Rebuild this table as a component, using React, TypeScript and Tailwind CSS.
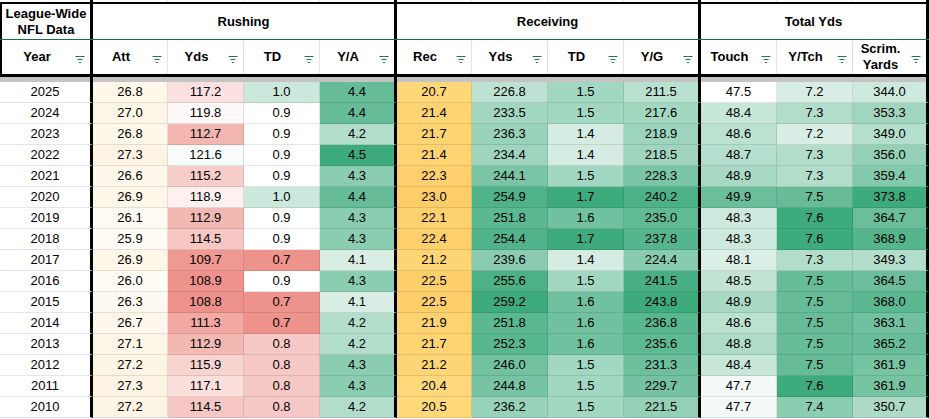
import React from "react";

type Col = { w: string; thick?: boolean };

const cols: Col[] = [
  { w: "w-[93px]", thick: true },
  { w: "w-[75px]" },
  { w: "w-[76px]" },
  { w: "w-[76px]" },
  { w: "w-[77px]", thick: true },
  { w: "w-[75px]" },
  { w: "w-[76px]" },
  { w: "w-[76px]" },
  { w: "w-[77px]", thick: true },
  { w: "w-[76px]" },
  { w: "w-[76px]" },
  { w: "w-[76px]", thick: true },
];

const years = [2025, 2024, 2023, 2022, 2021, 2020, 2019, 2018, 2017, 2016, 2015, 2014, 2013, 2012, 2011, 2010];
const att = [26.8, 27.0, 26.8, 27.3, 26.6, 26.9, 26.1, 25.9, 26.9, 26.0, 26.3, 26.7, 27.1, 27.2, 27.3, 27.2];
const ryds = [117.2, 119.8, 112.7, 121.6, 115.2, 118.9, 112.9, 114.5, 109.7, 108.9, 108.8, 111.3, 112.9, 115.9, 117.1, 114.5];
const rtd = [1.0, 0.9, 0.9, 0.9, 0.9, 1.0, 0.9, 0.9, 0.7, 0.9, 0.7, 0.7, 0.8, 0.8, 0.8, 0.8];
const ya = [4.4, 4.4, 4.2, 4.5, 4.3, 4.4, 4.3, 4.3, 4.1, 4.3, 4.1, 4.2, 4.2, 4.3, 4.3, 4.2];
const rec = [20.7, 21.4, 21.7, 21.4, 22.3, 23.0, 22.1, 22.4, 21.2, 22.5, 22.5, 21.9, 21.7, 21.2, 20.4, 20.5];
const recYds = [226.8, 233.5, 236.3, 234.4, 244.1, 254.9, 251.8, 254.4, 239.6, 255.6, 259.2, 251.8, 252.3, 246.0, 244.8, 236.2];
const recTd = [1.5, 1.5, 1.4, 1.4, 1.5, 1.7, 1.6, 1.7, 1.4, 1.5, 1.6, 1.6, 1.6, 1.5, 1.5, 1.5];
const yg = [211.5, 217.6, 218.9, 218.5, 228.3, 240.2, 235.0, 237.8, 224.4, 241.5, 243.8, 236.8, 235.6, 231.3, 229.7, 221.5];
const touch = [47.5, 48.4, 48.6, 48.7, 48.9, 49.9, 48.3, 48.3, 48.1, 48.5, 48.9, 48.6, 48.8, 48.4, 47.7, 47.7];
const ytch = [7.2, 7.3, 7.2, 7.3, 7.3, 7.5, 7.6, 7.6, 7.3, 7.5, 7.5, 7.5, 7.5, 7.5, 7.6, 7.4];
const scrim = [344.0, 353.3, 349.0, 356.0, 359.4, 373.8, 364.7, 368.9, 349.3, 364.5, 368.0, 363.1, 365.2, 361.9, 361.9, 350.7];

const hex = (h: string) => [1, 3, 5].map((i) => parseInt(h.slice(i, i + 2), 16));
const clamp = (t: number) => Math.max(0, Math.min(1, t));
function mix(a: string, b: string, t: number) {
  const A = hex(a);
  const B = hex(b);
  const k = clamp(t);
  const c = A.map((v, i) => Math.round(v + (B[i] - v) * k));
  return `rgb(${c[0]},${c[1]},${c[2]})`;
}

const WHITE = "#ffffff";
const GREEN = "#3eab7d";
const RED = "#ee918a";

const green = (v: number, lo: number, hi: number) => mix(WHITE, GREEN, (v - lo) / (hi - lo));

const scales: ((v: number) => string)[] = [
  () => WHITE,
  (v) => mix("#fffcf6", "#fdf4e3", (v - 25.9) / (27.3 - 25.9)),
  (v) => (v <= 120.5 ? mix(WHITE, RED, (120.5 - v) / (120.5 - 108.8)) : mix(WHITE, GREEN, (v - 120.5) / 30)),
  (v) => (v < 0.9 ? mix(WHITE, RED, ((0.9 - v) / 0.2) * 0.98) : v > 0.9 ? mix(WHITE, GREEN, 0.27) : WHITE),
  (v) => green(v, 4.0, 4.5),
  (v) => mix("#fed87a", "#fdcd68", (v - 20.4) / (23.0 - 20.4)),
  (v) => green(v, 210, 259.2),
  (v) => green(v, 1.315, 1.7),
  (v) => green(v, 193.3, 243.8),
  (v) => green(v, 47.5, 50.6),
  (v) => green(v, 7.1, 7.6),
  (v) => green(v, 333.5, 373.8),
];

function FilterIcon() {
  return (
    <svg width="10" height="7" viewBox="0 0 10 7" className="mt-[4px]">
      <path d="M0.5 0.5h9M2.5 3.5h5M4 6.5h2" stroke="#188038" strokeWidth="1" fill="none" />
    </svg>
  );
}

function HeadCell({ col, label, first }: { col: Col; label: React.ReactNode; first?: boolean }) {
  return (
    <div
      className={`${col.w} shrink-0 h-full flex items-center ${
        col.thick ? "border-r-[3px] border-r-black" : "border-r border-r-[#e2e2e2]"
      } ${first ? "border-l-2 border-l-black" : ""}`}
    >
      <span className="flex-1 text-center font-bold leading-[16px]">{label}</span>
      <span className="w-[18px] flex justify-end pr-[5px]">
        <FilterIcon />
      </span>
    </div>
  );
}

export default function App() {
  const rows = years.map((y, i) => [
    y,
    att[i],
    ryds[i],
    rtd[i],
    ya[i],
    rec[i],
    recYds[i],
    recTd[i],
    yg[i],
    touch[i],
    ytch[i],
    scrim[i],
  ]);
  const labels: React.ReactNode[] = [
    "Year",
    "Att",
    "Yds",
    "TD",
    "Y/A",
    "Rec",
    "Yds",
    "TD",
    "Y/G",
    "Touch",
    "Y/Tch",
    <>
      Scrim.
      <br />
      Yards
    </>,
  ];

  return (
    <div className="w-[929px] h-[419px] overflow-hidden bg-white text-black text-[13px] font-['Liberation_Sans',Arial,sans-serif]">
      {/* tail of the row above the frozen header */}
      <div className="flex h-[2px]">
        {cols.map((c, i) => (
          <div
            key={i}
            className={`${c.w} shrink-0 ${c.thick ? "border-r-[3px] border-r-black" : "border-r border-r-[#e2e2e2]"}`}
          />
        ))}
      </div>

      <div className="border-t-2 border-t-black border-b-[3px] border-b-black">
        <div className="flex h-[36px] border-b border-b-[#1b6e3e]">
          <div className="w-[93px] shrink-0 border-l-2 border-l-black border-r-[3px] border-r-black flex items-center justify-center text-center font-bold leading-[16px]">
            League-Wide
            <br />
            NFL Data
          </div>
          <div className="w-[304px] shrink-0 border-r-[3px] border-r-black flex items-center justify-center font-bold">
            Rushing
          </div>
          <div className="w-[304px] shrink-0 border-r-[3px] border-r-black flex items-center justify-center font-bold">
            Receiving
          </div>
          <div className="w-[228px] shrink-0 border-r-[3px] border-r-black flex items-center justify-center font-bold">
            Total Yds
          </div>
        </div>
        <div className="flex h-[34px]">
          {cols.map((c, i) => (
            <HeadCell key={i} col={c} label={labels[i]} first={i === 0} />
          ))}
        </div>
      </div>

      <div className="flex h-[5px]">
        {cols.map((c, i) => (
          <div
            key={i}
            className={`${c.w} shrink-0 bg-[#c4c4c4] ${c.thick ? "border-r-[3px] border-r-black" : ""}`}
          />
        ))}
      </div>

      {rows.map((r, ri) => (
        <div key={ri} className="flex h-[21px]">
          {r.map((v, ci) => {
            const c = cols[ci];
            return (
              <div
                key={ci}
                style={{ backgroundColor: scales[ci](v) }}
                className={`${c.w} shrink-0 flex items-center justify-center border-b border-b-black/10 ${
                  c.thick ? "border-r-[3px] border-r-black" : "border-r border-r-black/10"
                }`}
              >
                {ci === 0 ? v : v.toFixed(1)}
              </div>
            );
          })}
        </div>
      ))}
    </div>
  );
}
